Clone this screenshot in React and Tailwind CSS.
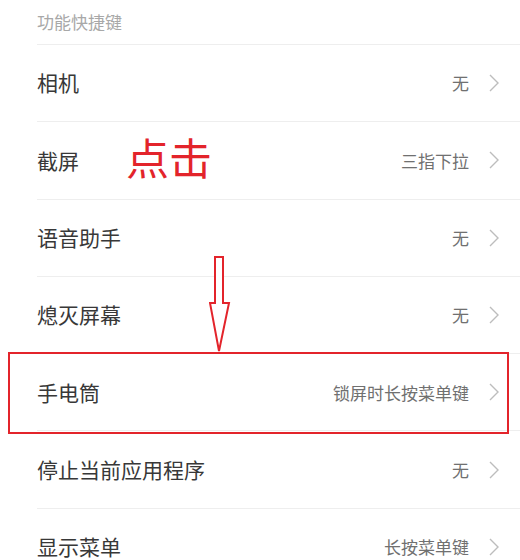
const rows = [
  ['相机', '无'],
  ['截屏', '三指下拉'],
  ['语音助手', '无'],
  ['熄灭屏幕', '无'],
  ['手电筒', '锁屏时长按菜单键'],
  ['停止当前应用程序', '无'],
  ['显示菜单', '长按菜单键'],
];

function Chevron() {
  return (
    <svg width="10" height="18" viewBox="0 0 10 18" className="shrink-0">
      <polyline points="1,1 9,9 1,17" fill="none" stroke="#bdbdbd" strokeWidth="1.4" />
    </svg>
  );
}

export default function App() {
  return (
    <div
      className="relative w-[520px] h-[560px] overflow-hidden bg-white"
      style={{ fontFamily: '"Noto Sans CJK SC", "Noto Sans", sans-serif' }}
    >
      {/* Section title */}
      <div className="h-[44px] pl-[37px] flex items-center text-[17px] text-[#a8a8a8]">
        功能快捷键
      </div>

      {/* Settings rows */}
      <div className="ml-[37px]">
        {rows.map(([label, value]) => (
          <div
            key={label}
            className="h-[77.3px] border-t border-[#eeeeee] flex items-center justify-between pr-[21px]"
          >
            <span className="text-[21px] text-[#383838]">{label}</span>
            <div className="flex items-center gap-[20px]">
              <span className="text-[17px] text-[#707070]">{value}</span>
              <Chevron />
            </div>
          </div>
        ))}
      </div>

      {/* Annotations */}
      <span className="absolute left-[126px] top-[135px] text-[43px] leading-none text-[#e3242b]">
        点击
      </span>

      <svg className="absolute left-[209px] top-[255px]" width="22" height="100" viewBox="0 0 22 100">
        <path d="M6 2 H14 V48 H20 L10 96 L1 48 H6 Z" fill="white" stroke="#e3242b" strokeWidth="2" strokeLinejoin="miter" />
      </svg>

      <div className="absolute left-[8px] top-[352px] w-[501px] h-[82px] border-2 border-[#e3242b]" />
    </div>
  );
}
